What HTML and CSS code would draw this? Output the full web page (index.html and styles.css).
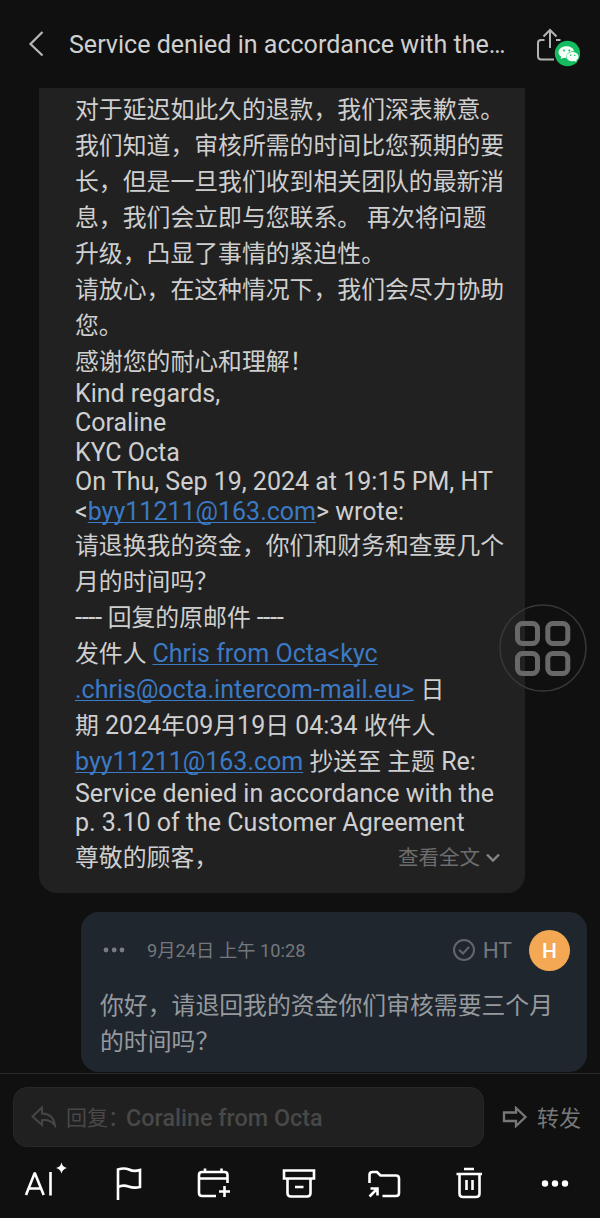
FILE: index.html
```html
<!DOCTYPE html>
<html lang="zh-CN">
<head>
<meta charset="utf-8">
<title>Mail</title>
<link rel="stylesheet" href="styles.css">
</head>
<body>
<div class="app">
  <header class="header">
    <svg class="back" width="18" height="28" viewBox="0 0 18 28"><path d="M15.500 2L3.500 14L15.500 25.500"/></svg>
    <h1 class="title">Service denied in accordance with the…</h1>
    <svg class="share" width="46" height="42" viewBox="0 0 46 42">
      <g fill="none" stroke="#b4b4b4" stroke-width="2"><path d="M10.500 12H7q-3 0-3 3v13q0 3.500 3.500 3.500H20M16 20V2.500M9.500 8.500L16 2L22.500 8.500M22 12h4.500"/></g>
      <circle cx="33.500" cy="25.500" r="12.700" fill="#15bc5f"/>
      <path fill="#f5fff8" d="M32.500 18.300c-4.600 0-8 2.700-8 6 0 1.900 1.100 3.400 2.700 4.500l-.5 2.300 2.700-1.400q1.200.4 2.600.4c0-4.300 3.400-6.900 8.100-6.800-.7-3-3.700-5-7.600-5z"/>
      <path fill="#f5fff8" d="M38.700 24c-3.600 0-6.300 2.200-6.300 4.700s2.700 4.600 6.300 4.600l1.900-.3 2.100 1.200-.5-2c1.700-1.100 2.300-2.200 2.300-3.500 0-2.500-2.500-4.700-5.800-4.700z"/>
      <g fill="#15bc5f"><circle cx="30" cy="22.500" r="1"/><circle cx="35.300" cy="22.500" r="1"/><circle cx="36.700" cy="27.300" r=".8"/><circle cx="40.700" cy="27.300" r=".8"/></g>
    </svg>
  </header>

  <main class="thread">
    <article class="mail">
      <div class="zh">
        <p>对于延迟如此久的退款，我们深表歉意。</p>
        <p>我们知道，审核所需的时间比您预期的要</p>
        <p>长，但是一旦我们收到相关团队的最新消</p>
        <p>息，我们会立即与您联系。 再次将问题</p>
        <p>升级，凸显了事情的紧迫性。</p>
        <p>请放心，在这种情况下，我们会尽力协助</p>
        <p>您。</p>
        <p>感谢您的耐心和理解！</p>
      </div>
      <div class="en">
        <p>Kind regards,</p>
        <p>Coraline</p>
        <p>KYC Octa</p>
        <p>On Thu, Sep 19, 2024 at 19:15 PM, HT</p>
        <p>&lt;<a>byy11211@163.com</a>&gt; wrote:</p>
      </div>
      <div class="zh second">
        <p>请退换我的资金，你们和财务和查要几个</p>
        <p>月的时间吗？</p>
        <p><span class="dashes">----</span> 回复的原邮件 <span class="dashes">----</span></p>
        <p>发件人 <a>Chris from Octa&lt;kyc</a></p>
        <p><a>.chris@octa.intercom-mail.eu&gt;</a><i> </i>日</p>
        <p>期<i> 2024</i>年<i>09</i>月<i>19</i>日<i> 04:34 </i>收件人</p>
        <p><a>byy11211@163.com</a><i> </i>抄送至<i> </i>主题<i> Re:</i></p>
      </div>
      <div class="en">
        <p>Service denied in accordance with the</p>
        <p>p. 3.10 of the Customer Agreement</p>
      </div>
      <div class="zh last">
        <p>尊敬的顾客，</p>
        <span class="more">查看全文<svg width="16" height="12" viewBox="0 0 16 12"><path d="M2 2.500L8 8.500L14 2.500"/></svg></span>
      </div>
    </article>

    <article class="reply">
      <div class="meta">
        <svg class="dots" width="24" height="6" viewBox="0 0 24 6"><circle cx="3" cy="3" r="2.400"/><circle cx="11.200" cy="3" r="2.400"/><circle cx="19" cy="3" r="2.400"/></svg>
        <time class="time">9月24日 上午 10:28</time>
        <svg class="check" width="24" height="24" viewBox="0 0 24 24"><circle cx="12" cy="12" r="10"/><path d="M7 11.800L11 15.500L17 9"/></svg>
        <span class="who">HT</span>
        <span class="avatar">H</span>
      </div>
      <div class="body">
        <p>你好，请退回我的资金你们审核需要三个月</p>
        <p>的时间吗？</p>
      </div>
    </article>
  </main>

  <footer class="footer">
    <div class="compose">
      <div class="field">
        <svg width="26" height="22" viewBox="0 0 26 22"><path d="M11 1.500L1.500 10.500L11 19V14.300Q19 13 24 19.500Q22.500 8 11 7.500Z"/></svg>
        <span>回复：</span><b>Coraline from Octa</b>
      </div>
      <div class="forward">
        <svg width="26" height="22" viewBox="0 0 26 22"><path d="M2 6.500H14V2L23.500 11L14 20V15H2Z"/></svg>
        <span>转发</span>
      </div>
    </div>
    <nav class="tools">
      <svg viewBox="0 0 48 44"><path d="M6 35L14.500 13.500H15L23.700 35M9.500 28.500H20.500M30.500 12V35.500"/><path stroke="none" fill="#fff" d="M41.500 2.500Q42.500 7 47 8Q42.500 9 41.500 13.500Q40.500 9 36 8Q40.500 7 41.500 2.500Z"/></svg>
      <svg viewBox="0 0 48 44"><path d="M13 40V9.500Q19 7.500 24 9.500Q29 12 35 10V27Q29 28.500 23.500 26.500Q18 24.500 13 27"/></svg>
      <svg viewBox="0 0 48 44"><path d="M26 36H12Q9 36 9 33V15Q9 12 12 12H34.500Q37.500 12 37.500 15V23M9 18.500H37.500M15 8.500V12M31.500 8.500V12M34.500 26V37M29 31.500H40"/></svg>
      <svg viewBox="0 0 48 44"><path d="M9 10.500H39V18.500H9ZM12.500 19V33Q12.500 36.500 16 36.500H32Q35.500 36.500 35.500 33V19M20 27H28.500"/></svg>
      <svg viewBox="0 0 48 44"><path d="M9.500 23V15Q9.500 12 12.500 12H17L20.500 15.500H36Q39 15.500 39 18.500V33Q39 36 36 36H22.500M9.500 36.500L17 29M10.500 28.500H17.500V35.500"/></svg>
      <svg viewBox="0 0 48 44"><path d="M11.500 14H37M19 9H29M14.500 14.500V33.500Q14.500 37 18 37H31Q34.500 37 34.500 33.500V14.500M21.500 20V30M27.500 20V30"/></svg>
      <svg viewBox="0 0 48 44"><g fill="#fff" stroke="none"><circle cx="15" cy="23.500" r="3.200"/><circle cx="25" cy="23.500" r="3.200"/><circle cx="35" cy="23.500" r="3.200"/></g></svg>
    </nav>
  </footer>

  <button class="float" aria-label="apps">
    <svg width="88" height="88" viewBox="0 0 88 88"><circle cx="44" cy="44" r="43" fill="none" stroke="#383838" stroke-width="1.500"/><g fill="none" stroke="#686868" stroke-width="5"><rect x="18.500" y="19.500" width="20" height="20" rx="5"/><rect x="48.800" y="19.500" width="20" height="20" rx="5"/><rect x="18.500" y="49.500" width="20" height="20" rx="5"/><rect x="48.800" y="49.500" width="20" height="20" rx="5"/></g></svg>
  </button>
</div>
</body>
</html>
```
FILE: styles.css
```css
* { box-sizing: border-box; }
body {
  margin: 0;
  background: #101010;
  color: #cfcfcf;
  font-family: Roboto, "Noto Sans CJK SC", sans-serif;
}
p, h1 { margin: 0; }
svg { display: block; flex: none; }
.app {
  position: relative;
  width: 600px;
  height: 1218px;
  display: flex;
  flex-direction: column;
  overflow: hidden;
}
.header {
  height: 88px;
  flex: none;
  display: flex;
  align-items: center;
  padding: 0 18px 0 27px;
}
.back { fill: none; stroke: #b8b8b8; stroke-width: 2.2; }
.title {
  margin-left: 24px;
  width: 467px;
  font-size: 25.05px;
  font-weight: 400;
  white-space: nowrap;
}
.share { margin: 10px 0 0 -2px; }
.thread { height: 985px; flex: none; }
.mail {
  width: 486px;
  height: 805px;
  margin-left: 39px;
  padding: 4px 0 0 36px;
  background: #212121;
  border-radius: 0 0 18px 18px;
  white-space: nowrap;
}
.zh { font-size: 23.85px; line-height: 36px; }
.zh p { height: 36px; }
.zh a, .zh i { font-size: 25px; font-style: normal; line-height: 1; }
.en { font-size: 25px; line-height: 29.4px; margin-top: -1px; }
.second { padding-top: 2px; }
.mail a {
  color: #3b7ac6;
  text-decoration: underline;
  text-decoration-thickness: 1.3px;
  text-underline-offset: 2px;
  text-decoration-skip-ink: none;
}
.dashes { font-size: 26px; line-height: 1; letter-spacing: -0.5px; }
.last { display: flex; justify-content: space-between; padding: 2px 24px 0 0; }
.more {
  display: flex;
  align-items: center;
  gap: 5px;
  color: #6d6d6d;
  font-size: 20.5px;
}
.more svg { fill: none; stroke: #858585; stroke-width: 2.4; }
.reply {
  width: 506px;
  height: 160px;
  margin: 19px 0 0 81px;
  padding: 17px 17px 0 19px;
  background: #20262e;
  border-radius: 18px;
  color: #969a9e;
}
.meta { display: flex; align-items: center; height: 42px; color: #74787c; }
.dots { margin-left: 3px; fill: #777c81; }
.time { margin: 0 0 2px 20px; font-size: 18.3px; white-space: nowrap; }
.check { margin-left: auto; fill: none; stroke: #60666c; stroke-width: 2; }
.who { margin-left: 7px; font-size: 22.500px; }
.avatar {
  width: 41px;
  height: 41px;
  margin-left: 17px;
  border-radius: 50%;
  background: #f4a854;
  color: #fff;
  font-size: 21px;
  font-weight: 500;
  line-height: 42px;
  text-align: center;
}
.body { margin-top: 17px; font-size: 23.85px; line-height: 36px; white-space: nowrap; }
.footer { height: 145px; border-top: 1px solid #292929; }
.compose { display: flex; padding: 13px 0 0 13px; }
.field {
  width: 471px;
  height: 60px;
  display: flex;
  align-items: center;
  padding-left: 17px;
  background: #202020;
  border: 1px solid #282828;
  border-radius: 14px;
  color: #484848;
}
.field svg { margin-right: 9px; fill: none; stroke: #464646; stroke-width: 2; }
.field span { width: 60px; padding-bottom: 3px; font-size: 21px; white-space: nowrap; }
.field b { padding-top: 2px; font-size: 23.4px; font-weight: 500; }
.forward {
  display: flex;
  align-items: center;
  gap: 9px;
  margin-left: 18px;
  color: #777;
  font-size: 22px;
}
.forward svg { fill: none; stroke: #777; stroke-width: 2.3; }
.forward span { padding-bottom: 3px; }
.tools { display: flex; gap: 37px; padding: 13px 0 0 20px; }
.tools svg { width: 48px; height: 44px; fill: none; stroke: #fff; stroke-width: 2.6; }
.float {
  position: absolute;
  left: 499px;
  top: 604px;
  padding: 0;
  border: 0;
  background: none;
}
```
